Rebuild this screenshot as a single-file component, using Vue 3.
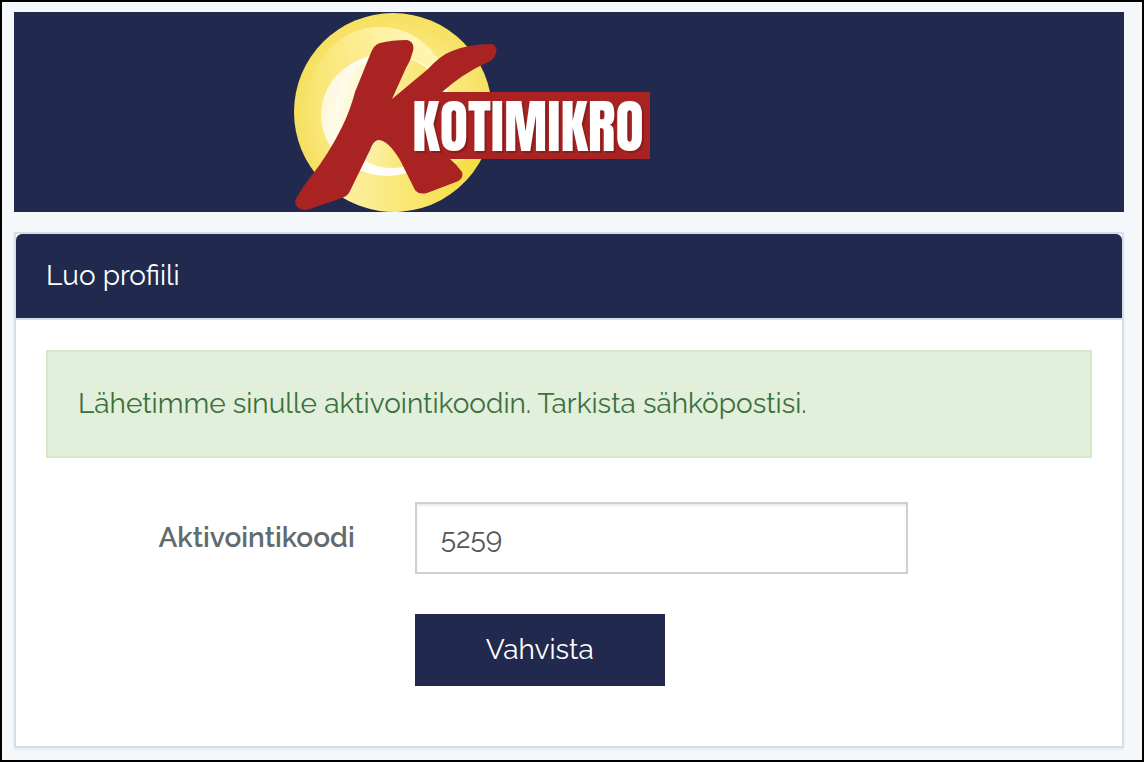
<template>
  <div class="page">
    <header class="brand-bar">
      <svg class="brand-logo" viewBox="0 0 356 200" role="img" aria-label="Kotimikro">
        <defs>
          <radialGradient id="disc" cx="0.5" cy="0.5" r="0.5">
            <stop offset="0" stop-color="#fdf2a0" />
            <stop offset="0.65" stop-color="#fae980" />
            <stop offset="1" stop-color="#f6e060" />
          </radialGradient>
          <linearGradient id="swoosh" x1="0" y1="0.7" x2="0.6" y2="0">
            <stop offset="0" stop-color="#f8e468" stop-opacity="0" />
            <stop offset="1" stop-color="#fff4b0" />
          </linearGradient>
          <linearGradient id="crescent" x1="0" y1="0.3" x2="1" y2="0.5">
            <stop offset="0" stop-color="#fdf6d6" />
            <stop offset="0.3" stop-color="#fffefa" />
            <stop offset="1" stop-color="#fffdf0" />
          </linearGradient>
          <linearGradient id="core" x1="0" y1="0.3" x2="1" y2="0.5">
            <stop offset="0" stop-color="#fffdf4" />
            <stop offset="0.3" stop-color="#fcf3bc" />
            <stop offset="0.6" stop-color="#faea84" />
            <stop offset="1" stop-color="#f6de54" />
          </linearGradient>
          <linearGradient id="lower" x1="0" y1="0" x2="1" y2="0">
            <stop offset="0" stop-color="#fcf0a4" />
            <stop offset="1" stop-color="#f5dc3c" />
          </linearGradient>
        </defs>
        <circle cx="99" cy="100" r="99" fill="url(#disc)" />
        <path d="M60 160Q110 170 190 142A99 99 0 0 1 46 184Z" fill="url(#lower)" />
        <circle cx="86" cy="84" r="69" fill="url(#swoosh)" />
        <ellipse cx="93" cy="103" rx="66" ry="61" fill="url(#crescent)" />
        <circle cx="98" cy="100" r="56" fill="url(#core)" />
        <path
          d="M48 115Q56 99 61 80L76 43Q80 32 86 31Q98 28 113 28Q121 30 119 39Q117 48 112 56L98 87L134 57Q147 43 158 39Q175 32 198 32Q204 35 202 41Q200 49 190 52Q170 61 148 80H356V147H156Q162 152 168 160Q170 167 162 170L133 181Q125 183 121 178L106 148Q94 128 84 128Q79 129 76 138L56 179Q54 184 48 186L16 197Q6 200 2 193Q0 190 3 185Q9 174 18 163Q34 143 48 115Z"
          fill="#a92323"
        />
        <text class="brand-shadow" x="236" y="141" text-anchor="middle">KOTIMIKRO</text>
        <text class="brand-name" x="234" y="139" text-anchor="middle">KOTIMIKRO</text>
      </svg>
    </header>

    <main class="panel">
      <h1 class="panel-heading">Luo profiili</h1>
      <div class="panel-body">
        <p class="alert" role="status">Lähetimme sinulle aktivointikoodin. Tarkista sähköpostisi.</p>

        <form class="activation-form" @submit.prevent>
          <label class="form-label" for="activation-code">Aktivointikoodi</label>
          <input id="activation-code" v-model="code" class="form-input" type="text" />
          <button class="submit-button" type="submit">Vahvista</button>
        </form>
      </div>
    </main>
  </div>
</template>

<script setup>
import { ref } from 'vue'

const code = ref('5259')
</script>

<style>
body {
  margin: 0;
  background-color: #f5f8fa;
}
</style>

<style scoped>
.page {
  box-sizing: border-box;
  min-height: 100vh;
  padding: 10px 18px 12px 12px;
  border: 2px solid #000;
  background-color: #f5f8fa;
  color: #636b6f;
  font-family: Raleway, Lato, sans-serif;
  font-size: 28px;
  font-weight: 400;
  line-height: 44px;
}

.brand-bar {
  display: flex;
  margin-bottom: 20px;
  padding-left: 280px;
  background-color: #21294f;
}

.brand-logo {
  display: block;
  width: 356px;
  height: 200px;
}

.brand-name,
.brand-shadow {
  font-family: Anton, "League Gothic", Oswald, "Roboto Condensed", sans-serif;
  font-size: 58px;
  font-weight: 400;
}

.brand-name {
  fill: #fff;
}

.brand-shadow {
  fill: #8a1c1c;
}

.panel {
  border: 2px solid #d3e0e9;
  background-color: #fff;
  box-shadow: 0 2px 2px rgba(0, 0, 0, 0.05);
}

.panel-heading {
  margin: 0;
  padding: 20px 30px;
  border-bottom: 2px solid #d3e0e9;
  border-radius: 6px 6px 0 0;
  background-color: #21294f;
  background-clip: padding-box;
  color: #fff;
  font-size: 28px;
  font-weight: 400;
}

.panel-body {
  padding: 30px 30px 60px;
}

.alert {
  margin: 0 0 44px;
  padding: 30px;
  border: 2px solid #d6e9c6;
  background-color: #e1efdb;
  color: #3c703d;
}

.activation-form {
  display: grid;
  grid-template-columns: 4fr 6fr 2fr;
  row-gap: 40px;
  align-items: center;
  margin: 0 -30px;
}

.form-label {
  padding-right: 30px;
  font-weight: 600;
  text-align: right;
}

.form-input {
  box-sizing: border-box;
  min-width: 0;
  height: 72px;
  margin: 0 30px;
  padding: 12px 24px;
  border: 2px solid #ccd0d2;
  border-radius: 0;
  background-color: #fff;
  box-shadow: inset 0 2px 2px rgba(0, 0, 0, 0.075);
  color: #555;
  font: inherit;
  outline: none;
}

.submit-button {
  grid-column: 2;
  justify-self: start;
  width: 250px;
  height: 72px;
  margin-left: 30px;
  padding: 0;
  border: 0;
  background-color: #21294f;
  color: #fff;
  font: inherit;
  cursor: pointer;
}
</style>
